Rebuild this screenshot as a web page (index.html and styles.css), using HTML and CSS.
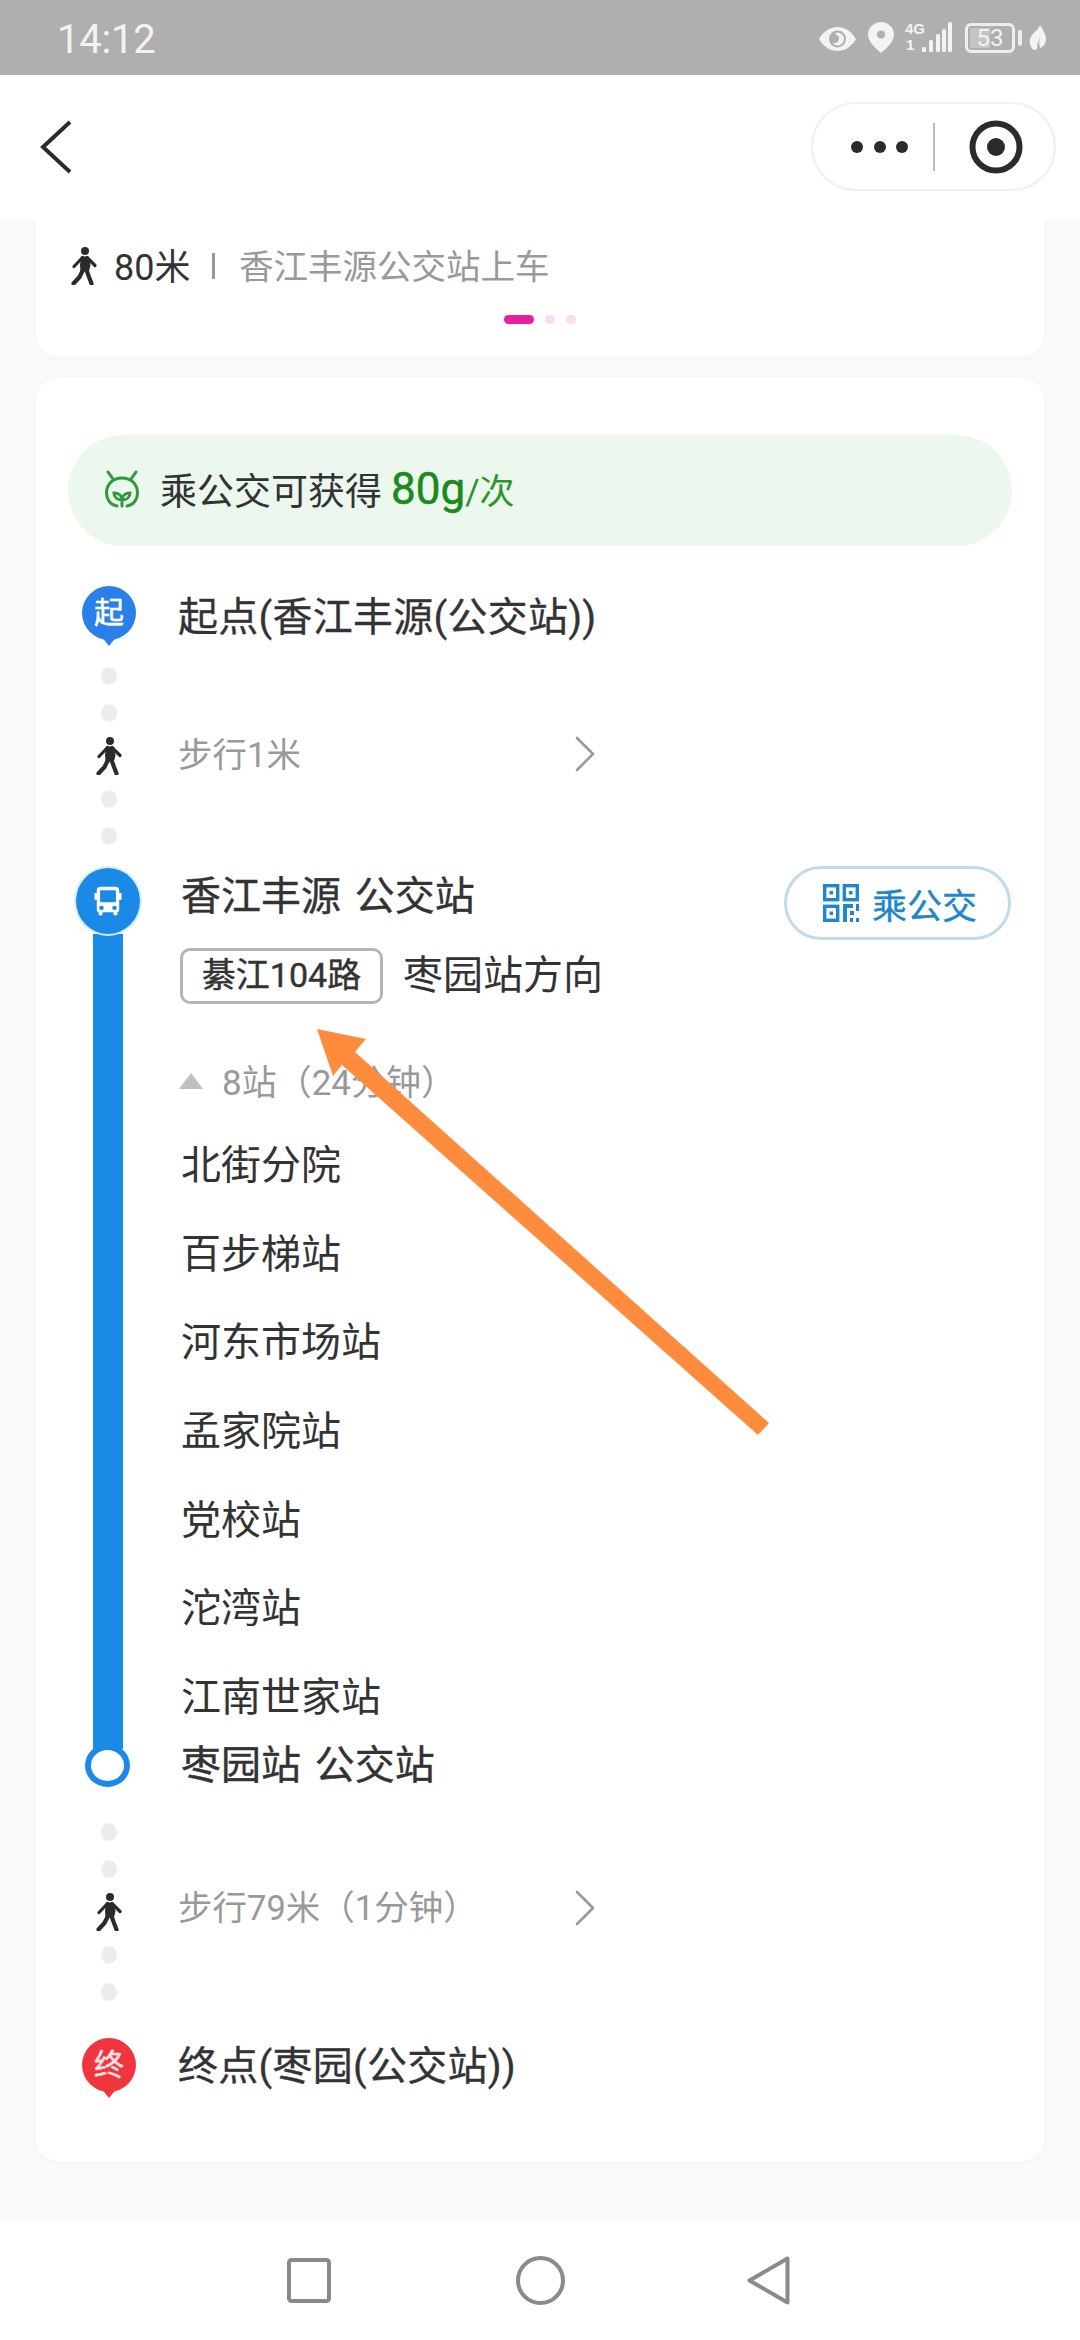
FILE: index.html
```html
<!DOCTYPE html>
<html lang="zh-CN">
<head>
<meta charset="utf-8">
<title>乘公交</title>
<link rel="stylesheet" href="styles.css">
</head>
<body>
<svg class="defs" width="0" height="0">
  <symbol id="walker" viewBox="0 0 26 38">
    <circle cx="14" cy="4" r="4" fill="currentColor"/>
    <path d="M10 9.500h7.500l2 9-1.500 5.500h-8.500l-.5-6z" fill="currentColor"/>
    <path d="M11.500 10.500 3 19.500M16 10.500 24 18.500" stroke="currentColor" stroke-width="3.200" stroke-linecap="round" fill="none"/>
    <path d="M12 23 8.500 30 2.500 36.500M15.500 23 18 30 20.500 36.500" stroke="currentColor" stroke-width="4.200" stroke-linecap="round" stroke-linejoin="round" fill="none"/>
  </symbol>
  <symbol id="chev" viewBox="0 0 20 36">
    <path d="M2 2 18 18 2 34" stroke="currentColor" stroke-width="2.600" stroke-linecap="round" stroke-linejoin="round" fill="none"/>
  </symbol>
</svg>

<header class="status">
  <span class="clock">14:12</span>
  <div class="status-icons">
    <svg class="ic-eye" viewBox="0 0 37 24"><path fill-rule="evenodd" d="M0 12C5 3.500 12 0 18.500 0S32 3.500 37 12c-5 8.500-12 12-18.500 12S5 20.500 0 12zm18.500-8.500a8.500 8.500 0 1 0 0 17 8.500 8.500 0 0 0 0-17z" fill="#f3f3f3"/><path fill-rule="evenodd" d="M18.500 5.500a6.500 6.500 0 1 1 0 13 6.500 6.500 0 0 1-5-2.400c3 .6 6-.6 6.500-3.600.4-2.800-1.500-4.500-4-5.500a7 7 0 0 1 2.500-1.500z" fill="#f3f3f3"/></svg>
    <svg class="ic-pin" viewBox="0 0 26 31"><path fill-rule="evenodd" d="M13 0C5.800 0 0 5.600 0 12.600 0 20 7.500 26.500 13 31c5.500-4.500 13-11 13-18.400C26 5.600 20.200 0 13 0zm0 8.500a4 4 0 1 1 0 8 4 4 0 0 1 0-8z" fill="#f3f3f3"/></svg>
    <svg class="ic-signal" viewBox="0 0 47 31">
      <text class="sig-text" x="0" y="12">4G</text>
      <text class="sig-text" x="1" y="28">1</text>
      <rect x="17" y="25" width="4" height="5" rx="1.500" fill="#f3f3f3"/>
      <rect x="24" y="18" width="4" height="12" rx="1.500" fill="#f3f3f3"/>
      <rect x="31" y="12" width="4" height="18" rx="1.500" fill="#f3f3f3"/>
      <rect x="37" y="7" width="4" height="23" rx="1.500" fill="#f3f3f3"/>
      <rect x="43" y="0" width="4" height="30" rx="1.500" fill="#f3f3f3"/>
    </svg>
    <div class="battery">
      <div class="battery-body"><span class="battery-fill"></span><span class="battery-num">53</span></div>
      <span class="battery-cap"></span>
    </div>
    <svg class="ic-leaf" viewBox="0 0 17 25"><path d="M11 0C13 4 17 8 17 14c0 5-3 8-6 9l-1-5 1-6-2.500 7L8 24c-1 .6-2 1-3 1C2 23 0 19 1 14 2.500 8 9 6 11 0z" fill="#f3f3f3"/></svg>
  </div>
</header>

<nav class="topbar">
  <svg class="back" viewBox="0 0 32 54"><path d="M30 2 3 27 30 52" stroke="#2b2b2b" stroke-width="4" fill="none"/></svg>
  <div class="capsule">
    <div class="more"><i></i><i></i><i></i></div>
    <span class="cap-line"></span>
    <svg class="target" viewBox="0 0 54 54"><circle cx="27" cy="27" r="23.500" fill="none" stroke="#2b2b2b" stroke-width="6"/><circle cx="27" cy="27" r="9" fill="#2b2b2b"/></svg>
  </div>
</nav>

<main class="content">
  <section class="card card-top">
    <div class="summary">
      <svg class="walker-top"><use href="#walker"/></svg>
      <span class="sum-dist">80米</span>
      <span class="sum-sep"></span>
      <span class="sum-text">香江丰源公交站上车</span>
    </div>
    <div class="pager"><i class="on"></i><i></i><i></i></div>
  </section>

  <section class="card card-route">
    <div class="pill">
      <svg class="leaf-bug" viewBox="0 0 36 38">
        <g fill="none" stroke="#2f9a3a" stroke-width="3" stroke-linecap="round">
          <path d="M13 36C6 35 2.500 29 2.500 23 2.500 14 9 8 18 8s15.500 6 15.500 15c0 6-3.500 12-10.500 13"/>
          <path d="M9 9 4 2M27 9l5-7"/>
          <path d="M18 36v-8M18 30c-5 0-8-3-8-7 5 0 8 3 8 7zM18 30c5 0 8-3 8-7-5 0-8 3-8 7z"/>
        </g>
      </svg>
      <span class="pill-text">乘公交可获得</span>
      <span class="pill-num">80g</span><span class="pill-unit">/次</span>
    </div>

    <div class="row row-point">
      <div class="rail"><div class="pin pin-start">起</div></div>
      <div class="point-name">起点(香江丰源(公交站))</div>
    </div>

    <div class="row row-walk row-walk-a">
      <div class="rail">
        <i class="dot"></i><i class="dot"></i>
        <svg class="walker"><use href="#walker"/></svg>
        <i class="dot"></i><i class="dot"></i>
      </div>
      <div class="walk-info">
        <span>步行1米</span>
        <svg class="chev"><use href="#chev"/></svg>
      </div>
    </div>

    <div class="row row-ride">
      <div class="rail-ride">
        <div class="bus-mark">
          <svg viewBox="0 0 30 36" preserveAspectRatio="none"><path fill-rule="evenodd" d="M7 1h16c2.500 0 4 1.500 4 4v3h2.500v8H27v12c0 1.500-1 2.500-2 2.500v3.500h-4v-3.500H9v3.500H5v-3.500c-1 0-2-1-2-2.500V16H.5V8H3V5c0-2.500 1.500-4 4-4zm1 4c-1 0-1.500.5-1.500 1.500v11c0 1 .5 1.500 1.500 1.500h14c1 0 1.500-.5 1.500-1.500v-11c0-1-.5-1.500-1.500-1.500zm0 18a2.500 2.500 0 1 0 0 5 2.500 2.500 0 0 0 0-5zm14 0a2.500 2.500 0 1 0 0 5 2.500 2.500 0 0 0 0-5z" fill="#fff"/></svg>
        </div>
        <div class="bus-bar"></div>
        <div class="bus-end"></div>
      </div>
      <div class="ride-body">
        <div class="ride-head">
          <div>
            <div class="ride-title">香江丰源&nbsp;&nbsp;公交站</div>
            <div class="ride-line">
              <span class="tag">綦江104路</span>
              <span class="direction">枣园站方向</span>
            </div>
          </div>
          <button class="qr-btn">
            <svg viewBox="0 0 36 38">
              <g fill="none" stroke="#1f86d0" stroke-width="3.400">
                <rect x="1.700" y="1.700" width="13" height="14"/>
                <rect x="21.300" y="1.700" width="13" height="14"/>
                <rect x="1.700" y="22.300" width="13" height="14"/>
              </g>
              <g fill="#1f86d0">
                <rect x="6.500" y="7" width="3.500" height="3.500"/>
                <rect x="26" y="7" width="3.500" height="3.500"/>
                <rect x="6.500" y="27.500" width="3.500" height="3.500"/>
                <path d="M20 20h10v4h-6v14h-4zM27 27h4v4h-4zM33 20h3v7h-3zM27 34h3v4h-3zM33 34h3v4h-3z"/>
              </g>
            </svg>
            <span>乘公交</span>
          </button>
        </div>
        <div class="count"><i class="tri"></i><span>8站（24分钟）</span></div>
        <ul class="stops">
          <li>北街分院</li>
          <li>百步梯站</li>
          <li>河东市场站</li>
          <li>孟家院站</li>
          <li>党校站</li>
          <li>沱湾站</li>
          <li>江南世家站</li>
        </ul>
        <div class="ride-end">枣园站&nbsp;&nbsp;公交站</div>
      </div>
    </div>

    <div class="row row-walk row-walk-b">
      <div class="rail">
        <i class="dot"></i><i class="dot"></i>
        <svg class="walker"><use href="#walker"/></svg>
        <i class="dot"></i><i class="dot"></i>
      </div>
      <div class="walk-info">
        <span>步行79米（1分钟）</span>
        <svg class="chev"><use href="#chev"/></svg>
      </div>
    </div>

    <div class="row row-point row-final">
      <div class="rail"><div class="pin pin-end">终</div></div>
      <div class="point-name">终点(枣园(公交站))</div>
    </div>
  </section>
</main>

<footer class="navbar">
  <svg class="nb-square" viewBox="0 0 44 45"><rect x="2" y="2" width="40" height="41" rx="2.500" fill="none" stroke="#8a8a8a" stroke-width="4"/></svg>
  <svg class="nb-circle" viewBox="0 0 49 49"><circle cx="24.500" cy="24.500" r="22.500" fill="none" stroke="#8a8a8a" stroke-width="4"/></svg>
  <svg class="nb-back" viewBox="0 0 43 49"><path d="M40.500 2.500V46.500L2.500 24.500Z" fill="none" stroke="#8a8a8a" stroke-width="4" stroke-linejoin="round"/></svg>
</footer>

<svg class="arrow" viewBox="0 0 1080 2340"><polygon points="317,1029 366,1039 355,1052 769,1423 758,1435 342,1065 333,1076" fill="#ff8c3c"/></svg>
</body>
</html>
```

FILE: styles.css
```css
* { box-sizing: border-box; }
html, body { margin: 0; padding: 0; }
body {
  position: relative;
  width: 1080px;
  height: 2340px;
  overflow: hidden;
  display: flex;
  flex-direction: column;
  background: #f9f9f9;
  color: #333;
  font-family: Roboto, "Noto Sans CJK SC", sans-serif;
}
i { display: block; }
.defs { position: absolute; }

/* status bar */
.status {
  height: 75px;
  flex: none;
  background: #afafaf;
  display: flex;
  align-items: center;
  justify-content: space-between;
  padding: 0 34px 0 57px;
  color: #f3f3f3;
}
.clock { font-size: 40px; line-height: 71px; padding-top: 4px; letter-spacing: -.2px; }
.status-icons { display: flex; align-items: center; }
.ic-eye { width: 37px; height: 24px; margin-right: 12px; margin-top: 3px; }
.ic-pin { width: 26px; height: 31px; margin-right: 11px; }
.ic-signal { width: 47px; height: 31px; margin-right: 13px; overflow: visible; }
.sig-text { font: 700 15px "Liberation Sans", sans-serif; fill: #f3f3f3; }
.battery { display: flex; align-items: center; gap: 3px; margin-right: 7px; }
.battery-body {
  position: relative;
  width: 50px;
  height: 30px;
  border: 3px solid #eee;
  border-radius: 6px;
  display: flex;
  align-items: center;
  justify-content: center;
}
.battery-fill { position: absolute; left: 2px; top: 2px; bottom: 2px; width: 20px; background: #c4c4c4; }
.battery-num { position: relative; font-size: 24px; line-height: 24px; color: #f3f3f3; }
.battery-cap { width: 4px; height: 16px; background: #eee; border-radius: 2px; }
.ic-leaf { width: 17px; height: 25px; }

/* top navigation */
.topbar {
  height: 145px;
  flex: none;
  background: #fff;
  display: flex;
  align-items: center;
  justify-content: space-between;
  padding: 0 24px 2px 40px;
  position: relative;
  z-index: 1;
}
.back { width: 32px; height: 54px; }
.capsule {
  width: 245px;
  height: 89px;
  border: 2px solid #f0f0f0;
  border-radius: 45px;
  display: flex;
  align-items: center;
  padding-left: 38px;
}
.more { display: flex; gap: 10.500px; }
.more i { width: 12px; height: 12px; border-radius: 50%; background: #2b2b2b; }
.cap-line { width: 1.500px; height: 48px; background: #bbb; margin-left: 25px; }
.target { width: 54px; height: 54px; margin-left: 34px; }

/* content */
.content {
  flex: 1;
  padding: 0 36px;
  display: flex;
  flex-direction: column;
  gap: 20px;
  min-height: 0;
}
.card { background: #fff; box-shadow: 0 1px 5px rgba(0, 0, 0, .03); }
.card-top {
  height: 137px;
  border-radius: 0 0 24px 24px;
  padding: 19px 34px 0;
}
.summary { display: flex; align-items: center; height: 50px; }
.walker-top { width: 28px; height: 38px; margin: 4px 16px 0 0; color: #2b2b2b; }
.sum-dist { font-size: 36px; color: #333; }
.sum-sep { width: 2.500px; height: 26px; background: #999; margin: 4px 24px 0 22px; }
.sum-text { font-size: 34.500px; color: #999; }
.pager { display: flex; justify-content: center; gap: 11px; margin-top: 26px; }
.pager i { width: 10px; height: 9px; border-radius: 5px; background: #f9dcef; }
.pager i.on { width: 30px; background: #e620a0; }

.card-route {
  border-radius: 24px;
  padding: 58px 33px 64px 10px;
}
.pill {
  height: 111px;
  margin: 0 -1px 0 22px;
  border-radius: 56px;
  background: #ecf7ee;
  display: flex;
  align-items: center;
  padding: 0 0 4px 36px;
}
.leaf-bug { width: 36px; height: 38px; margin-right: 20px; }
.pill-text { font-size: 37px; color: #333; margin-right: 9px; }
.pill-num { font-size: 44px; color: #1a8a1a; -webkit-text-stroke: .5px #1a8a1a; }
.pill-unit { font-size: 35px; color: #2a962a; }

.row { display: flex; }
.rail {
  width: 126px;
  flex: none;
  display: flex;
  flex-direction: column;
  align-items: center;
}
.row-point { margin-top: 40px; min-height: 61px; }
.point-name { font-size: 40px; line-height: 62px; padding: 1px 0 0 6px; color: #333; letter-spacing: .25px; -webkit-text-stroke: .3px #333; }
.pin {
  position: relative;
  width: 54px;
  height: 54px;
  border-radius: 50%;
  color: #fff;
  font-size: 30px;
  line-height: 54px;
  text-align: center;
  -webkit-text-stroke: .5px currentColor;
}
.pin::after {
  content: "";
  position: absolute;
  left: 50%;
  top: 50px;
  margin-left: -8px;
  border: 8px solid transparent;
  border-bottom: 0;
  border-top: 10px solid currentColor;
}
.pin-start { background: #2a7fe8; }
.pin-start::after { border-top-color: #2a7fe8; }
.pin-end { background: #f0353f; color: #ffe4e4; }
.pin-end::after { border-top-color: #f0353f; }
.row-final { margin-top: 37px; min-height: 60px; }
.row-final .point-name { line-height: 56px; }

.row-walk-a { margin-top: 18px; }
.row-walk-b { margin-top: 34px; }
.dot { width: 16px; height: 18px; border-radius: 50%; background: #ececec; }
.dot + .dot { margin-top: 19px; }
.walker { width: 26px; height: 38px; color: #2b2b2b; margin: 15px 0; }
.walk-info {
  width: 426px;
  display: flex;
  align-items: center;
  justify-content: space-between;
  padding: 0 3px 13px 6px;
  font-size: 34.500px;
  color: #999;
}
.row-walk-a .walk-info { padding-bottom: 9px; }
.chev { width: 20px; height: 36px; color: #999; margin-top: 6px; }
.row-walk-a .chev { margin-top: 4px; }

/* ride segment */
.row-ride { margin-top: 21px; }
.rail-ride {
  width: 123px;
  flex: none;
  display: flex;
  flex-direction: column;
  align-items: center;
}
.bus-mark {
  width: 68px;
  height: 70px;
  flex: none;
  border-radius: 50%;
  background: #1a8ae6;
  border: 2px solid #d8eefb;
  display: flex;
  align-items: center;
  justify-content: center;
  position: relative;
  z-index: 1;
}
.bus-mark svg { width: 28px; height: 31px; }
.bus-bar { width: 30px; flex: 1; background: #1a8ae6; margin-top: -2px; }
.bus-end {
  width: 45px;
  height: 43px;
  flex: none;
  margin-top: -5px;
  margin-bottom: 2px;
  border-radius: 50%;
  background: #fff;
  border: 6px solid #1a8ae6;
  position: relative;
}
.ride-body { flex: 1; padding-left: 12px; min-width: 0; }
.ride-head { display: flex; justify-content: space-between; align-items: flex-start; }
.ride-title {
  font-size: 40px;
  line-height: 56px;
  padding-top: 3px;
  color: #333;
  white-space: nowrap;
  word-spacing: -3px;
  -webkit-text-stroke: .4px #333;
}
.ride-line { display: flex; align-items: center; margin-top: 23px; }
.tag {
  width: 203px;
  height: 56px;
  margin-left: -1px;
  border: 3px solid #b5b5b5;
  border-radius: 10px;
  font-size: 34px;
  line-height: 48px;
  text-align: center;
  color: #333;
  -webkit-text-stroke: .4px #333;
}
.direction { font-size: 40px; line-height: 50px; margin: 0 0 0 20px; color: #333; }
.qr-btn {
  width: 227px;
  height: 74px;
  border: 3px solid #bfdcec;
  border-radius: 37px;
  background: #fff;
  display: flex;
  align-items: center;
  padding: 0 0 0 36px;
  gap: 13px;
  color: #1f86cc;
  font-family: inherit;
  font-size: 35px;
  -webkit-text-stroke: .4px #1f86cc;
}
.qr-btn svg { width: 36px; height: 38px; flex: none; }
.count {
  display: flex;
  align-items: center;
  height: 50px;
  margin-top: 50px;
  font-size: 35px;
  color: #999;
}
.tri {
  width: 0;
  height: 0;
  margin: 4px 19px 0 -2px;
  border: 12.500px solid transparent;
  border-top: 0;
  border-bottom: 16px solid #c0c0c0;
}
.stops { list-style: none; margin: 18px 0 0; padding: 0; }
.stops li { height: 88.670px; line-height: 87px; font-size: 40px; color: #333; }
.ride-end {
  font-size: 40px;
  line-height: 46px;
  color: #333;
  white-space: nowrap;
  word-spacing: -3px;
  -webkit-text-stroke: .4px #333;
}

/* system nav */
.navbar {
  height: 120px;
  flex: none;
  background: #fff;
  display: flex;
  align-items: center;
  padding-left: 287px;
}
.nb-square { width: 44px; height: 45px; margin-right: 185px; }
.nb-circle { width: 49px; height: 49px; margin-right: 182px; }
.nb-back { width: 43px; height: 49px; }

.arrow { position: absolute; left: 0; top: 0; width: 1080px; height: 2340px; pointer-events: none; z-index: 2; }
```
